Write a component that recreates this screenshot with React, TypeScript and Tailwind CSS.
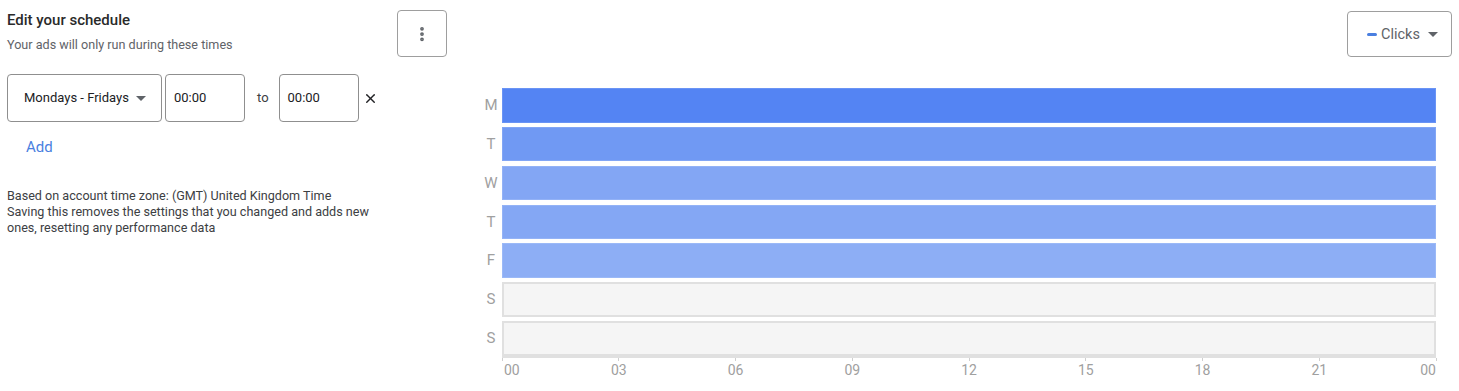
import { MoreVertical, X } from 'lucide-react'

const days = [
  { label: 'M', cls: 'bg-[#5484f3] border border-[#6a94f5]' },
  { label: 'T', cls: 'bg-[#7099f3] border border-[#82a6f5]' },
  { label: 'W', cls: 'bg-[#83a6f4] border border-[#93b2f6]' },
  { label: 'T', cls: 'bg-[#84a7f4] border border-[#94b3f6]' },
  { label: 'F', cls: 'bg-[#8daef5] border border-[#9bb9f7]' },
  { label: 'S', cls: 'bg-[#f5f5f5] border-2 border-[#e0e0e0]' },
  { label: 'S', cls: 'bg-[#f5f5f5] border-2 border-[#e0e0e0]' },
]

const hours = ['00', '03', '06', '09', '12', '15', '18', '21', '00']

function Caret({ className }: { className?: string }) {
  return (
    <svg width="10" height="5" viewBox="0 0 10 5" className={className}>
      <path d="M0 0h10L5 5z" fill="currentColor" />
    </svg>
  )
}

export default function App() {
  return (
    <div className="flex h-[391px] w-full bg-white font-['Roboto','Liberation_Sans',sans-serif] text-[#202124]">
      <div className="w-[447px] shrink-0 pl-[7px]">
        <div className="flex items-start justify-between">
          <div className="pt-[10px]">
            <h2 className="text-[15px] font-medium leading-[20px] text-[#2a2a2a]">Edit your schedule</h2>
            <p className="mt-[7px] text-[12.6px] leading-[16px] text-[#5f6368]">
              Your ads will only run during these times
            </p>
          </div>
          <button className="mt-[10px] flex h-[47px] w-[50px] items-center justify-center rounded-[4px] border border-[#9e9e9e] text-[#5f6368]">
            <MoreVertical size={18} strokeWidth={3} />
          </button>
        </div>

        <div className="mt-[17px] flex items-center">
          <button className="flex h-[48px] w-[155px] items-center justify-between rounded-[4px] border border-[#8f8f8f] pl-[16px] pr-[15px] text-[13px]">
            <span>Mondays - Fridays</span>
            <Caret className="text-[#5f6368]" />
          </button>
          <div className="ml-[3px] flex h-[48px] w-[80px] items-center rounded-[4px] border border-[#8f8f8f] pl-[8px] text-[13px]">
            00:00
          </div>
          <span className="ml-[12px] mr-[10px] text-[13px] text-[#3c4043]">to</span>
          <div className="flex h-[48px] w-[80px] items-center rounded-[4px] border border-[#8f8f8f] pl-[8px] text-[13px]">
            00:00
          </div>
          <X size={15} strokeWidth={2.2} className="ml-[4px] text-[#202124]" />
        </div>

        <div className="mt-[15px] pl-[19px] text-[15px] leading-[20px] text-[#4a7fe0]">Add</div>

        <div className="mt-[31px] text-[12.6px] leading-[16px] text-[#3c4043]">
          <p>Based on account time zone: (GMT) United Kingdom Time</p>
          <p className="w-[385px]">
            Saving this removes the settings that you changed and adds new ones, resetting any performance data
          </p>
        </div>
      </div>

      <div className="flex flex-1 flex-col pl-[33px] pr-[7px] pt-[11px]">
        <div className="flex justify-end">
          <button className="flex h-[46px] w-[105px] items-center rounded-[4px] border border-[#9e9e9e] pl-[19px] pt-px text-[14.5px] text-[#5f6368]">
            <span className="mr-[4px] h-[3px] w-[10px] rounded-full bg-[#4a7fe0]" />
            <span>Clicks</span>
            <Caret className="ml-[8px] text-[#5f6368]" />
          </button>
        </div>

        <div className="mt-[31px] mr-[16px] flex flex-col gap-[4.25px]">
          {days.map((d, i) => (
            <div key={i} className="flex h-[34.6px] items-center">
              <span className="w-[22px] text-center text-[15px] text-[#a0a0a0]">{d.label}</span>
              <div className={`h-full flex-1 ${d.cls}`} />
            </div>
          ))}
        </div>

        <div className="mr-[16px] ml-[22px] flex justify-between border-t-2 border-[#e0e0e0]">
          {hours.map((h, i) => (
            <div key={i} className="relative flex w-0 flex-col items-center">
              <span className="h-[3px] w-px bg-[#cfcfcf]" />
              <span
                className={`mt-[2px] text-[14px] leading-[15px] text-[#a0a0a0] ${
                  i === 0 ? 'self-start pl-[2px]' : i === hours.length - 1 ? 'self-end' : ''
                }`}
              >
                {h}
              </span>
            </div>
          ))}
        </div>
      </div>
    </div>
  )
}
